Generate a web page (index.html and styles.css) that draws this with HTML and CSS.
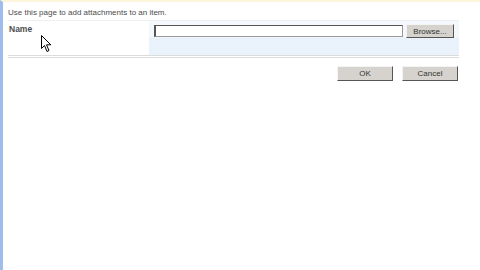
FILE: index.html
```html
<!DOCTYPE html>
<html lang="en">

<head>
    <meta charset="UTF-8">
    <title>Upload Attachment</title>
    <link rel="stylesheet" href="styles.css">
</head>

<body>
    <div class="page">
        <div class="intro">Use this page to add attachments to an item.</div>

        <div class="form-table">
            <div class="label-cell">Name</div>
            <div class="field-cell">
                <div class="file-row">
                    <input type="text" class="file-input">
                    <button class="btn browse">Browse...</button>
                </div>
            </div>
        </div>

        <div class="actions">
            <button class="btn action">OK</button>
            <button class="btn action">Cancel</button>
        </div>
    </div>

    <!-- mouse pointer seen in the screenshot -->
    <svg class="pointer" width="12" height="18" viewBox="0 0 12 18">
        <path d="M0.5 0.5 L0.5 13.5 L3.5 10.5 L6 16.5 L8 15.5 L5.5 9.8 L9.8 9.8 Z" fill="#fff" stroke="#000"
            stroke-width="1" />
    </svg>
</body>

</html>
```

FILE: styles.css
```css
html,
body {
    height: 100%;
}

body {
    margin: 0;
    background-color: #fff;
    border-top: 2px solid #fcf5dc;
    border-left: 3px solid #9fbcec;
    box-sizing: border-box;
    font-family: Tahoma, 'Liberation Sans', Arial, sans-serif;
    position: relative;
}

.page {
    padding: 5px 0 0 5px;
    width: 451px;
}

.intro {
    font-size: 8px;
    color: #4c4c4c;
    height: 13px;
    line-height: 12px;
}

.form-table {
    display: flex;
    border-top: 1px solid #eceff3;
    border-bottom: 3px double #dcdcdc;
    height: 34px;
}

.label-cell {
    width: 140px;
    padding: 3px 1px;
    font-size: 8.5px;
    font-weight: bold;
    color: #4d4d4d;
}

.field-cell {
    flex: 1;
    background: linear-gradient(#f4f8fd 0, #f4f8fd 16px, #e9f1fb 17px, #eaf2fc 100%);
    padding: 3px 5px 0 5px;
}

.file-row {
    display: flex;
    align-items: center;
    gap: 3px;
}

.file-input {
    width: 249px;
    height: 12px;
    box-sizing: border-box;
    margin: 0;
    padding: 0;
    border: 1px solid #9a9a9a;
    border-top-color: #555;
    border-left: 2px solid #555;
    background-color: #fff;
}

.btn {
    font-family: Tahoma, 'Liberation Sans', Arial, sans-serif;
    font-size: 8px;
    color: #333;
    background-color: #d6d3ce;
    border: 1px solid;
    border-color: #f4f4f4 #555 #555 #f4f4f4;
    padding: 0;
    margin: 0;
    cursor: pointer;
}

.browse {
    width: 48px;
    height: 14px;
}

.actions {
    display: flex;
    justify-content: flex-end;
    gap: 9px;
    margin-top: 8px;
    padding-right: 1px;
}

.action {
    width: 56px;
    height: 15px;
}

.pointer {
    position: absolute;
    left: 38px;
    top: 33px;
}
```
